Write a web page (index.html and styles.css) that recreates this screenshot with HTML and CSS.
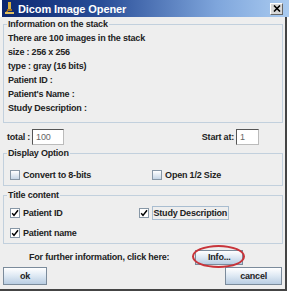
FILE: index.html
```html
<!DOCTYPE html>
<html lang="en">
<head>
  <meta charset="UTF-8" />
  <title>Dicom Image Opener</title>
  <link rel="stylesheet" href="styles.css">
</head>
<body>
  <div class="titlebar">
    <svg class="app-icon" width="11" height="13" viewBox="0 0 11 13">
      <rect x="4" y="0" width="3" height="7" fill="#d8b040" />
      <rect x="3" y="7" width="5" height="2" fill="#a07020" />
      <rect x="1" y="10" width="9" height="2" fill="#e0c060" />
      <rect x="2" y="9" width="2" height="1" fill="#a07020" />
    </svg>
    <span class="title">Dicom Image Opener</span>
    <span class="close">
      <svg width="8" height="7" viewBox="0 0 8 7">
        <path d="M1 0.5 L7 6.5 M7 0.5 L1 6.5" stroke="#000" stroke-width="1.6" />
      </svg>
    </span>
  </div>

  <div class="pane">
    <fieldset class="group info">
      <legend>Information on the stack</legend>
      <div class="line">There are 100 images in the stack</div>
      <div class="line">size : 256 x 256</div>
      <div class="line">type : gray (16 bits)</div>
      <div class="line">Patient ID :</div>
      <div class="line">Patient's Name :</div>
      <div class="line">Study Description :</div>
    </fieldset>

    <div class="range">
      <label class="field">total :<span class="input">100</span></label>
      <label class="field start">Start at:<span class="input small">1</span></label>
    </div>

    <fieldset class="group display">
      <legend>Display Option</legend>
      <div class="checks">
        <span class="check"><span class="box"></span>Convert to 8-bits</span>
        <span class="check col2"><span class="box"></span>Open 1/2 Size</span>
      </div>
    </fieldset>

    <fieldset class="group titles">
      <legend>Title content</legend>
      <div class="checks">
        <span class="check"><span class="box on"></span>Patient ID</span>
        <span class="check col2b"><span class="box on"></span><span class="focus">Study Description</span></span>
      </div>
      <div class="checks second">
        <span class="check"><span class="box on"></span>Patient name</span>
      </div>
    </fieldset>

    <div class="more">
      <span>For further information, click here:</span>
      <span class="btn info-btn">Info...</span>
    </div>

    <div class="actions">
      <span class="btn action">ok</span>
      <span class="btn action">cancel</span>
    </div>
  </div>
</body>
</html>
```

FILE: styles.css
```css
body { margin: 0; background: #fff; font-family: "Liberation Sans", Arial, sans-serif; font-size: 9px; font-weight: bold; color: #222; letter-spacing: -0.2px; }

.titlebar { width: 287px; height: 17px; margin-left: 2px; display: flex; align-items: center; background: linear-gradient(to right, #0c2770 0%, #2a4e98 35%, #7fa6dc 75%, #aacbf0 100%); }
.app-icon { margin-left: 2px; }
.title { color: #fff; font-size: 11px; letter-spacing: -0.1px; margin-left: 3px; flex: 1; }
.close { width: 11px; height: 10px; margin-right: 6px; background: #d8d8d8; border: 1px solid #fff; border-right-color: #666; border-bottom-color: #666; display: flex; align-items: center; justify-content: center; }

.pane { width: 280px; height: 272px; padding: 0 2px 0 3px; background: #eeeeee; border-right: 2px solid #444; border-bottom: 2px solid #444; display: flex; flex-direction: column; }

.group { margin: 0; padding: 0 0 0 4px; border: 1px solid #c2d0dd; min-width: 0; }
.group legend { padding: 0 1px; margin-left: -1px; line-height: 14px; }
.line { line-height: 14px; }
.info { padding-top: 0; padding-bottom: 7px; }

.range { display: flex; align-items: center; justify-content: space-between; margin-top: 5px; height: 17px; padding: 0 24px 0 4px; }
.field { display: flex; align-items: center; }
.input { display: inline-block; width: 27px; height: 14px; margin-left: 2px; padding-left: 3px; line-height: 14px; background: #fff; border: 1px solid #bbb; border-top-color: #555; border-left-color: #555; color: #666; font-weight: normal; }
.input.small { width: 18px; }

.display { margin-top: 1px; padding-top: 8px; padding-bottom: 3px; }
.titles { margin-top: 2px; padding-top: 4px; padding-bottom: 3px; }
.checks { display: flex; align-items: center; height: 14px; padding-left: 2px; }
.checks.second { margin-top: 6px; }
.check { display: flex; align-items: center; }
.col2 { margin-left: 61px; }
.col2b { margin-left: 76px; }
.box { width: 8px; height: 8px; margin-right: 3px; border: 1px solid #8797a6; background: linear-gradient(#ffffff, #c6d6e6); }
.box.on { background: #fff url("data:image/svg+xml;utf8,<svg xmlns='http://www.w3.org/2000/svg' width='8' height='8'><path d='M1.2 4.2 L3 6.4 L7 1.2' fill='none' stroke='black' stroke-width='1.5'/></svg>") no-repeat center; }
.focus { padding: 1px 1px; border: 1px solid #a9bdd0; }

.more { display: flex; align-items: center; height: 18px; margin-top: 4px; padding-left: 26px; gap: 26px; position: relative; }
.btn { display: inline-flex; align-items: center; justify-content: center; border: 1px solid #7b8b9b; background: linear-gradient(#ffffff, #dde8f3 50%, #b9cde2); }
.info-btn { width: 46px; height: 13px; position: relative; }
.info-btn::after { content: ""; position: absolute; left: -4px; top: -6px; width: 49px; height: 19px; border: 2px solid #c8343a; border-radius: 50%; }

.actions { display: flex; justify-content: space-between; margin-top: 1px; padding-right: 1px; }
.action { height: 16px; padding: 0 14px; }
.action:first-child { width: 14px; }
```
